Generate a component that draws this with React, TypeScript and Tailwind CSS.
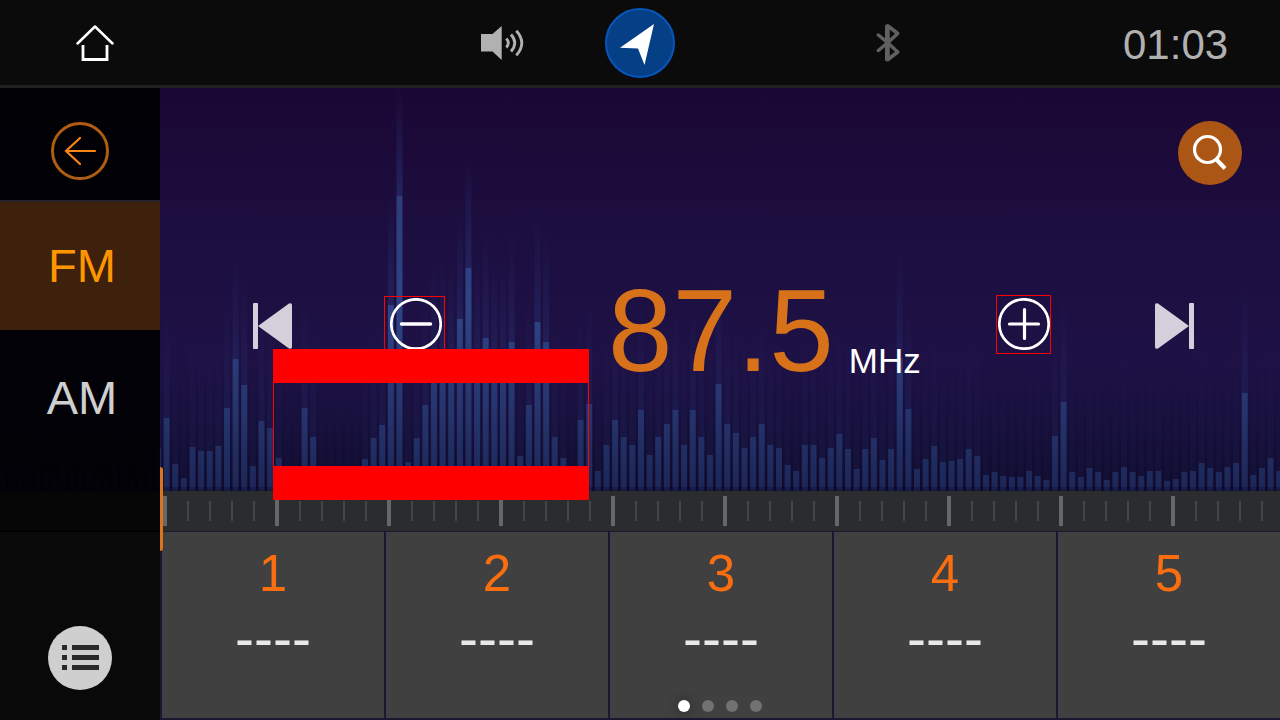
import { useState } from "react";

const SPECTRUM_HEIGHT = 403;

/* Level of each band, in pixels above the tuner scale. */
const LEVELS = [
  18, 25, 15, 25, 21, 18, 12, 25, 15, 18, 22, 15, 9, 27, 22, 9, 12, 18, 43,
  73, 27, 13, 44, 40, 40, 45, 83, 132, 106, 25, 70, 63, 33, 0, 0, 83, 54, 0, 0, 0,
  0, 0, 32, 53, 66, 186, 295, 29, 53, 86, 126, 126, 126, 172, 223, 126, 153, 131, 126, 149,
  35, 86, 169, 149, 54, 33, 0, 71, 87, 20, 46, 71, 54, 46, 81, 36, 54, 67, 81, 46,
  81, 54, 36, 107, 67, 58, 43, 54, 67, 46, 43, 26, 20, 46, 46, 33, 43, 57, 42, 22,
  42, 53, 31, 42, 133, 82, 22, 32, 45, 29, 30, 32, 42, 35, 16, 19, 15, 14, 14, 20,
  15, 11, 55, 89, 19, 14, 23, 19, 11, 19, 24, 19, 15, 20, 20, 10, 12, 19, 20, 28,
  23, 19, 24, 28, 98, 16, 23, 33, 20,
];

function Spectrum() {
  return (
    <svg
      className="absolute inset-x-0 top-0 h-[403px] w-full"
      viewBox="0 0 1280 403"
      preserveAspectRatio="none"
      aria-hidden="true"
    >
      <defs>
        <linearGradient id="sky" x1="0" y1="0" x2="0" y2="1">
          <stop offset="0" stopColor="#1b0734" />
          <stop offset="0.35" stopColor="#1c0e3f" />
          <stop offset="0.68" stopColor="#1e1145" />
          <stop offset="0.85" stopColor="#160f3a" />
          <stop offset="1" stopColor="#0f0a2b" />
        </linearGradient>
        <linearGradient id="bar" gradientUnits="userSpaceOnUse" x1="0" y1="100" x2="0" y2="403">
          <stop offset="0" stopColor="#2d3c7a" />
          <stop offset="0.4" stopColor="#2d4485" />
          <stop offset="0.7" stopColor="#26366f" />
          <stop offset="1" stopColor="#1c2757" />
        </linearGradient>
        <linearGradient id="glow" x1="0" y1="0" x2="0" y2="1">
          <stop offset="0" stopColor="#2f4c97" stopOpacity="0" />
          <stop offset="1" stopColor="#2f4c97" stopOpacity="1" />
        </linearGradient>
      </defs>
      <rect width="1280" height="403" fill="url(#sky)" />
      {LEVELS.map((level, i) => {
        const x = (i - 19) * 8.625 + 163.6;
        const top = SPECTRUM_HEIGHT - level;
        return (
          <g key={i}>
            <rect x={x} y={top - 110} width="6" height="110" fill="url(#glow)" opacity={Math.min(0.36, 0.06 + level / 850)} />
            <rect x={x} y={top} width="6" height={level} fill="url(#bar)" />
          </g>
        );
      })}
      <rect y="399" width="1280" height="4" fill="#0f0a2b" opacity="0.35" />
    </svg>
  );
}

function TunerScale() {
  return (
    <svg className="block h-10 w-full bg-[#2b2c2d]" aria-hidden="true">
      <defs>
        <pattern id="ticks" x="3" width="112" height="40" patternUnits="userSpaceOnUse">
          <rect y="5" width="4" height="30" fill="#666768" />
          <rect x="24" y="10" width="2" height="20" fill="#444546" />
          <rect x="46" y="10" width="2" height="20" fill="#444546" />
          <rect x="68" y="10" width="2" height="20" fill="#444546" />
          <rect x="90" y="10" width="2" height="20" fill="#444546" />
        </pattern>
      </defs>
      <rect width="100%" height="40" fill="url(#ticks)" />
    </svg>
  );
}

function StatusBar() {
  return (
    <header className="grid h-[88px] grid-cols-[404fr_125fr_271fr_247fr_157fr] items-center border-b-[3px] border-[#202020] bg-[#0b0b0b] pl-[76px]">
      <button aria-label="Home" className="w-fit">
        <svg className="h-10 w-[38px]" viewBox="0 0 38 40" fill="none" stroke="#fff">
          <path d="M1.5 20.5 19 3.5l17.500 17" strokeWidth="2.500" strokeLinecap="round" strokeLinejoin="round" />
          <path d="M7 22v14.500h24V22" strokeWidth="2.800" />
        </svg>
      </button>
      <button aria-label="Volume" className="w-fit">
        <svg className="h-10 w-11" viewBox="0 0 44 40" fill="none" stroke="#b1b1b1" strokeWidth="2.800">
          <path d="M1 11h11.500L21.700 3v34l-9.200-8.500H1z" fill="#b1b1b1" stroke="none" />
          <path d="M26.300 15.500q4 4.500 0 9M31 11.500q7.500 8.500 0 17M36.300 7.800q11 12.200 0 24.600" />
        </svg>
      </button>
      <button
        aria-label="Navigation"
        className="flex size-[70px] items-center justify-center rounded-full border-2 border-[#0755bd] bg-[#053f86]"
      >
        <svg className="size-[66px]" viewBox="0 0 66 66" fill="#fff">
          <path d="M47 14 13 37.700l18 .8L37.500 55z" />
        </svg>
      </button>
      <button aria-label="Bluetooth" className="w-fit">
        <svg className="h-10 w-6" viewBox="0 0 24 40" fill="none" stroke="#606060" strokeLinecap="round" strokeLinejoin="round">
          <path d="M2.300 12 12 20l9.700 9-9.700 7.500V3l9.700 7.500L12 19.500l-9.700 8" strokeWidth="3.500" />
          <path d="M11 3.200v33.300" strokeWidth="4" />
        </svg>
      </button>
      <time className="pt-1 text-[42px] leading-none text-[#b1b1b1]">01:03</time>
    </header>
  );
}

function Sidebar({ band, onBand }: { band: string; onBand: (b: string) => void }) {
  return (
    <nav className="relative z-10 flex w-40 shrink-0 flex-col bg-[linear-gradient(to_bottom,rgba(0,0,2,0.92)_403px,#060606_403px,#060606_442px,#020203_442px,#020203_444px,#090909_444px)]">
      <div className="flex h-28 items-center justify-center pt-[14px]">
        <button
          aria-label="Back"
          className="flex size-[58px] items-center justify-center rounded-full border-[3px] border-[#ae5d13]"
        >
          <svg className="h-8 w-9" viewBox="0 0 36 32" fill="none" stroke="#f98514" strokeWidth="2.200" strokeLinecap="round">
            <path d="M33 16H4M18 3 4 16l14 13" />
          </svg>
        </button>
      </div>
      {["FM", "AM"].map((name) => (
        <button
          key={name}
          aria-pressed={band === name}
          onClick={() => onBand(name)}
          className={
            band === name
              ? "h-[130px] border-t-2 border-[#25242c] bg-[#3d210c] pl-1 text-[47px] text-[#ff9600]"
              : "h-[134px] pl-1 pt-[2px] text-[47px] text-[#cfcfcf]"
          }
        >
          {name}
        </button>
      ))}
      <div className="mt-auto flex justify-center pb-[30px]">
        <button aria-label="Station list" className="flex size-16 items-center justify-center rounded-full bg-[#cfcfcf]">
          <svg className="size-16" viewBox="0 0 64 64" fill="#292929">
            <path d="M14 19h5v5h-5zM24 19h27v5H24zM14 29h5v5h-5zM24 29h27v5H24zM14 39h5v5h-5zM24 39h27v5H24z" />
          </svg>
        </button>
      </div>
      <div className="absolute -right-[3px] top-[379px] h-[84px] w-[3px] rounded-r-sm bg-[#da751b]" />
    </nav>
  );
}

function Controls() {
  return (
    <div className="grid grid-cols-[224fr_224fr_388fr_159fr_125fr] items-start">
      <button aria-label="Previous station" className="ml-[93px] mt-2 w-fit">
        <svg className="h-[46px] w-[39px]" viewBox="0 0 39 46" fill="#d3d0dc">
          <rect width="5" height="46" rx="0.800" />
          <path d="M5 23 36 .5Q39-.5 39 2v42q0 2.500-3 1.500z" />
        </svg>
      </button>
      <button
        aria-label="Tune down"
        className="mt-px flex h-[58px] w-[61px] justify-center border border-[#ff0000] pl-[3px] pt-px"
      >
        <svg className="size-[52px]" viewBox="0 0 52 52" fill="none" stroke="#fff">
          <circle cx="26" cy="26" r="24.700" strokeWidth="2.700" />
          <path d="M11.500 26h29" strokeWidth="3.500" strokeLinecap="round" />
        </svg>
      </button>
      <div className="flex items-end">
        <output className="-mt-6 text-[116px] leading-[120px] text-[#d8721a]">87.5</output>
        <span className="ml-[15px] pb-3 text-[35px] leading-9 text-white">MHz</span>
      </div>
      <button
        aria-label="Tune up"
        className="flex h-[59px] w-[55px] justify-center border border-[#ff0000] pt-[2px]"
      >
        <svg className="size-[52px]" viewBox="0 0 52 52" fill="none" stroke="#fff">
          <circle cx="26" cy="26" r="24.700" strokeWidth="2.700" />
          <path d="M11.500 26h29M26.500 11.500v29" strokeWidth="3.200" strokeLinecap="round" />
        </svg>
      </button>
      <button aria-label="Next station" className="mt-2 w-fit">
        <svg className="h-[46px] w-[39px]" viewBox="0 0 39 46" fill="#d3d0dc">
          <rect x="34" width="5" height="46" rx="0.800" />
          <path d="M34 23 3 .5Q0-.5 0 2v42q0 2.500 3 1.500z" />
        </svg>
      </button>
    </div>
  );
}

function Presets() {
  return (
    <div className="relative flex flex-1 bg-[#1b1733] pb-[2px] pl-[2px] pt-px">
      <div className="grid flex-1 grid-cols-5 gap-[2px]">
        {[1, 2, 3, 4, 5].map((n) => (
          <button key={n} className="flex flex-col items-center bg-[#404040] pt-4">
            <span className="text-[51px] leading-[52px] text-[#fb6e10]">{n}</span>
            <span className="mt-[10px] text-[57px] leading-[57px] text-[#e9e9e9]">----</span>
          </button>
        ))}
      </div>
      <div className="absolute inset-x-0 bottom-2 flex justify-center gap-3">
        <span className="size-3 rounded-full bg-white shadow-[0_0_10px_4px_rgba(0,0,0,0.15)]" />
        <span className="size-3 rounded-full bg-[#727272]" />
        <span className="size-3 rounded-full bg-[#727272]" />
        <span className="size-3 rounded-full bg-[#727272]" />
      </div>
    </div>
  );
}

export default function App() {
  const [band, setBand] = useState("FM");
  return (
    <div className="flex min-h-screen flex-col bg-[#0b0b0b] font-['Liberation_Sans',Arial,sans-serif]">
      <StatusBar />
      <div className="relative flex flex-1">
        <Spectrum />
        <Sidebar band={band} onBand={setBand} />
        <main className="relative flex min-w-0 flex-1 flex-col">
          <section className="flex h-[403px] flex-col">
            <div className="flex justify-end pb-[22px] pr-[38px] pt-[33px]">
              <button aria-label="Search" className="size-16 rounded-full bg-[#ac5615]">
                <svg className="size-16" viewBox="0 0 64 64" fill="none" stroke="#fff">
                  <circle cx="29.500" cy="28.500" r="13" strokeWidth="3.200" />
                  <path d="m38 38 9 9.500" strokeWidth="4" />
                </svg>
              </button>
            </div>
            <div className="mt-[88px]">
              <Controls />
            </div>
          </section>
          <TunerScale />
          <Presets />
          <div className="absolute left-[113px] top-[261px] h-[151px] w-[316px] border-x border-y-[34px] border-[#ff0000]" />
        </main>
      </div>
    </div>
  );
}
